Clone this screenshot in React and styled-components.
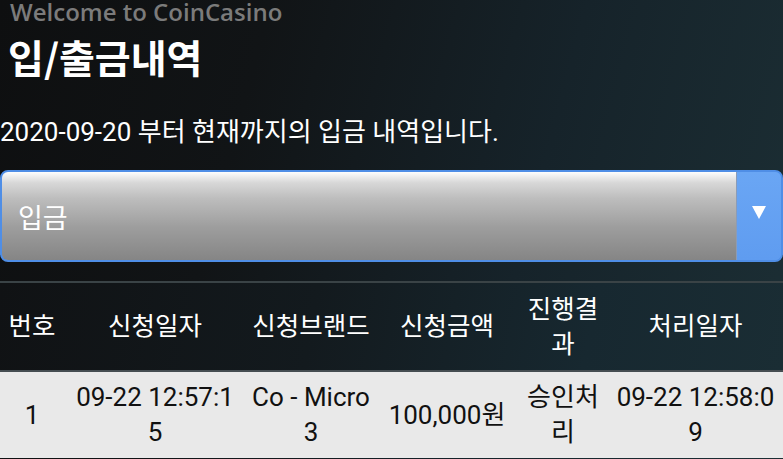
import React from 'react'
import styled, { createGlobalStyle } from 'styled-components'

const GlobalStyle = createGlobalStyle`
  html, body {
    margin: 0;
    padding: 0;
    height: 100%;
    overflow: hidden;
  }
  body {
    background: linear-gradient(105deg, #0e0f10 0%, #111416 30%, #16232a 65%, #1c2f35 100%);
    font-family: "Roboto", "Noto Sans CJK KR", sans-serif;
    color: #fff;
  }
`

const Page = styled.div`
  display: flex;
  flex-direction: column;
  width: 783px;
  height: 459px;
  overflow: hidden;
`

const Header = styled.header`
  display: flex;
  flex-direction: column;
  padding-left: 8px;
`

const Welcome = styled.div`
  font-family: "Open Sans", "Noto Sans CJK KR", sans-serif;
  font-size: 24px;
  line-height: 24px;
  padding-left: 2px;
  color: #7b7b7b;
  font-weight: 600;
`

const Title = styled.h1`
  margin: 10px 0 0;
  font-family: "Noto Sans CJK KR", sans-serif;
  font-size: 39px;
  line-height: 44px;
  font-weight: 700;
  color: #fff;
`

const Notice = styled.p`
  margin: 38px 0 0;
  font-size: 26px;
  line-height: 32px;
  color: #fff;
`

const SelectBox = styled.div`
  display: flex;
  margin-top: 22px;
  height: 88px;
  border: 2px solid #4f8ee6;
  border-radius: 8px;
  overflow: hidden;
  background: #5f9ef0;
`

const SelectValue = styled.div`
  flex: 1;
  display: flex;
  align-items: center;
  padding-left: 16px;
  font-size: 27px;
  color: #fff;
  background: linear-gradient(180deg, #fdfdfd 0%, #d8d8d8 12%, #bdbdbd 30%, #9e9e9e 62%, #858585 100%);
  border-right: 1px solid #8a9cb8;
`

const Arrow = styled.div`
  width: 44px;
  display: flex;
  align-items: center;
  justify-content: center;
  background: linear-gradient(180deg, #6aa6f4 0%, #5f9cf0 100%);

  svg {
    margin-top: -8px;
  }
`

const Table = styled.table`
  margin-top: 19px;
  width: 783px;
  border-collapse: collapse;
  table-layout: fixed;
  border-top: 2px solid #3a4346;
`

const HeadRow = styled.tr`
  background: linear-gradient(100deg, #101214 0%, #131a1e 40%, #172830 75%, #1a2d34 100%);
`

const HeadCell = styled.th`
  height: 87px;
  padding: 0 ${p => p.pad}px;
  font-weight: 400;
  font-size: 25.5px;
  line-height: 35px;
  color: #fff;
  text-align: center;
  vertical-align: middle;
  word-break: break-all;
`

const BodyRow = styled.tr`
  border-top: 2px solid #454d51;
  background: #e9e9e9;
`

const Cell = styled.td`
  height: 86px;
  padding: 0 ${p => p.pad}px;
  font-size: 26px;
  line-height: 35px;
  color: #111;
  text-align: center;
  vertical-align: middle;
  word-break: break-all;
`

const columns = [
  { title: '번호', width: 64, pad: 2 },
  { title: '신청일자', width: 182, pad: 8 },
  { title: '신청브랜드', width: 130, pad: 1 },
  { title: '신청금액', width: 142, pad: 2 },
  { title: '진행결과', width: 90, pad: 6 },
  { title: '처리일자', width: 175, pad: 4 },
]

const rows = [
  ['1', '09-22 12:57:15', 'Co - Micro3', '100,000원', '승인처리', '09-22 12:58:09'],
]

const App = () => {
  return (
    <>
      <GlobalStyle />
      <Page>
        <Header>
          <Welcome>Welcome to CoinCasino</Welcome>
          <Title>입/출금내역</Title>
        </Header>
        <Notice>2020-09-20 부터 현재까지의 입금 내역입니다.</Notice>
        <SelectBox>
          <SelectValue>입금</SelectValue>
          <Arrow>
            <svg width="14" height="13" viewBox="0 0 14 13">
              <path d="M0 0 L14 0 L7 13 Z" fill="#fff" />
            </svg>
          </Arrow>
        </SelectBox>
        <Table>
          <colgroup>
            {columns.map(c => (
              <col key={c.title} style={{ width: c.width }} />
            ))}
          </colgroup>
          <thead>
            <HeadRow>
              {columns.map(c => (
                <HeadCell key={c.title} pad={c.pad}>{c.title}</HeadCell>
              ))}
            </HeadRow>
          </thead>
          <tbody>
            {rows.map((r, i) => (
              <BodyRow key={i}>
                {r.map((v, j) => (
                  <Cell key={j} pad={columns[j].pad}>{v}</Cell>
                ))}
              </BodyRow>
            ))}
          </tbody>
        </Table>
      </Page>
    </>
  )
}

export default App
